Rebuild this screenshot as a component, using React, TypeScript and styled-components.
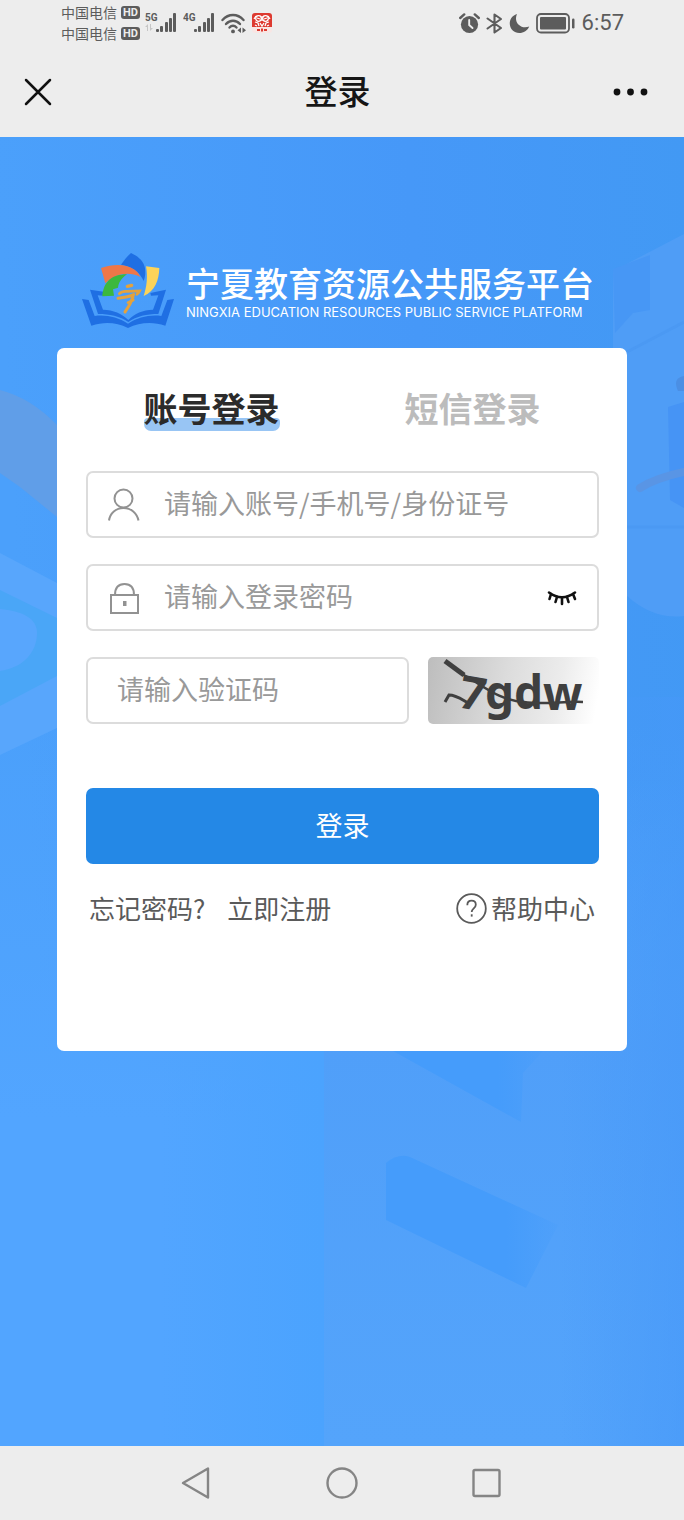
import React, { useState } from "react";
import styled, { createGlobalStyle } from "styled-components";

const GlobalStyle = createGlobalStyle`
  *, *::before, *::after { box-sizing: border-box; }
  body {
    margin: 0;
    font-family: "Noto Sans CJK SC", "Noto Sans", sans-serif;
    background: #ededed;
  }
  button, input { font-family: inherit; }
  svg { display: block; flex: none; }
`;

const Page = styled.div`
  min-height: 100vh;
  display: flex;
  flex-direction: column;
`;

const StatusBar = styled.div`
  height: 46px;
  padding: 0 60px 0 61px;
  display: flex;
  align-items: center;
  justify-content: space-between;
  color: #5c5c5c;
`;

const StatusGroup = styled.div<{ $gap: number }>`
  display: flex;
  align-items: center;
  gap: ${(p) => p.$gap}px;
`;

const Carriers = styled.div`
  display: flex;
  flex-direction: column;
`;

const Carrier = styled.div`
  display: flex;
  align-items: center;
  gap: 4px;
  font-size: 14px;
  line-height: 21px;
`;

const HdBadge = styled.span`
  width: 19px;
  height: 13px;
  border-radius: 3px;
  background: #5c5c5c;
  color: #ededed;
  font: 700 11px/13px Roboto, sans-serif;
  text-align: center;
`;

const Clock = styled.time`
  font: 400 22px/26px Roboto, sans-serif;
`;

const TitleBar = styled.header`
  height: 91px;
  padding: 0 31px 0 22px;
  display: grid;
  grid-template-columns: 1fr auto 1fr;
  align-items: center;
`;

const Title = styled.h1`
  margin: 0;
  padding-bottom: 4px;
  font-size: 33px;
  line-height: 48px;
  font-weight: 500;
  color: #161616;
`;

const IconButton = styled.button<{ $end?: boolean }>`
  justify-self: ${(p) => (p.$end ? "end" : "start")};
  padding: 0;
  border: 0;
  background: none;
  color: #111;
  cursor: pointer;
`;

const Main = styled.main`
  flex: 1;
  display: grid;
  grid-template: minmax(0, 1fr) / minmax(0, 1fr);
  overflow: hidden;
  background: #4a9efb;
`;

const Backdrop = styled.div`
  grid-area: 1 / 1;
  display: grid;
  contain: size;
  & > svg { width: 100%; height: 100%; }
`;

const Content = styled.div`
  grid-area: 1 / 1;
  position: relative;
  padding: 116px 57px 60px;
`;

const Brand = styled.div`
  display: flex;
  align-items: center;
  justify-content: center;
  gap: 12px;
  height: 75px;
  margin-bottom: 20px;
  padding-right: 8px;
  color: #fff;
`;

const BrandName = styled.div`
  font-size: 34px;
  line-height: 42px;
  font-weight: 500;
  white-space: nowrap;
`;

const BrandEnglish = styled.div`
  font: 400 13px/16px Inter, sans-serif;
  white-space: nowrap;
`;

const Card = styled.section`
  padding: 37px 24px 123px;
  border-radius: 7px;
  background: #fff;
`;

const Tabs = styled.div`
  display: grid;
  grid-template-columns: 1fr 1fr;
  justify-items: center;
`;

const Tab = styled.button<{ $active: boolean }>`
  position: relative;
  z-index: 0;
  padding: 0;
  border: 0;
  background: none;
  font-size: 34px;
  line-height: 46px;
  font-weight: 700;
  color: ${(p) => (p.$active ? "#2b2b2b" : "#bcbcbc")};
  cursor: pointer;

  &::after {
    content: "";
    display: ${(p) => (p.$active ? "block" : "none")};
    position: absolute;
    z-index: -1;
    inset: auto 0 0;
    height: 13px;
    border-radius: 4px 4px 7px 7px;
    background: #98c5f4;
  }
`;

const Form = styled.form`
  padding: 40px 4px 0 5px;
  display: flex;
  flex-direction: column;
  gap: 26px;
`;

const Field = styled.label<{ $inset?: number }>`
  width: 100%;
  min-width: 0;
  height: 67px;
  padding: 0 20px 0 ${(p) => p.$inset ?? 20}px;
  display: flex;
  align-items: center;
  gap: 24px;
  border: 2px solid #dcdcdc;
  border-radius: 7px;
  color: #929292;
`;

const TextInput = styled.input`
  flex: 1;
  min-width: 0;
  height: 44px;
  padding: 0 0 4px;
  border: 0;
  outline: 0;
  background: none;
  font-size: 27px;
  color: #333;
  &::placeholder { color: #999; opacity: 1; }
`;

const CaptchaRow = styled.div`
  display: flex;
  gap: 19px;
`;

const Captcha = styled.button`
  flex: none;
  width: 171px;
  height: 67px;
  padding: 0;
  border: 0;
  border-radius: 5px;
  background: linear-gradient(100deg, #bdbdbd 0%, #dcdcdc 45%, #ececec 75%, #fff 97%);
  cursor: pointer;
  & > svg { overflow: visible; }
`;

const Submit = styled.button`
  height: 76px;
  margin-top: 38px;
  padding: 0 0 4px;
  border: 0;
  border-radius: 7px;
  background: #2488e6;
  color: #fff;
  font-size: 27px;
  cursor: pointer;
`;

const Links = styled.nav`
  margin: 24px 8px 0;
  display: flex;
  align-items: center;
  gap: 22px;
  line-height: 40px;
`;

const TextLink = styled.a<{ $end?: boolean }>`
  margin-left: ${(p) => (p.$end ? "auto" : "0")};
  display: flex;
  align-items: center;
  gap: 4px;
  font-size: 26px;
  color: #5a5a5a;
  text-decoration: none;
`;

const SystemNav = styled.footer`
  height: 74px;
  display: flex;
  align-items: center;
  justify-content: center;
  gap: 113px;
  color: #858585;
`;

const Signal = ({ label, faded }: { label: string; faded?: boolean }) => (
  <svg width="33" height="22" viewBox="0 0 33 22" fill="currentColor" aria-label={label}>
    <text x="0" y="9" fontFamily="Roboto, sans-serif" fontSize="10" fontWeight="700">{label}</text>
    {faded && (
      <g fill="#c6c6c6">
        <path d="M0 15l3-3v7H2v-4zM5 12h1v4h2l-3 3z" />
      </g>
    )}
    <rect x="11" y="17" width="3" height="3" rx="1" />
    <rect x="15" y="14" width="3" height="6" rx="1" />
    <rect x="20" y="10" width="3" height="10" rx="1" />
    <rect x="24" y="6" width="3" height="14" rx="1" />
    <rect x="28" y="1" width="3" height="19" rx="1" />
  </svg>
);

const WifiIcon = () => (
  <svg width="26" height="21" viewBox="0 0 26 21" fill="none" stroke="currentColor" strokeWidth="2.4" strokeLinecap="round">
    <path d="M1.500 7C7.500 0.400 16.500 0.400 22.500 7" />
    <path d="M5 11C9 6.600 15 6.600 19 11" />
    <path d="M8.500 14.500C10.600 12.200 13.400 12.200 15.500 14.500" />
    <circle cx="12" cy="18.400" r="1.900" fill="currentColor" stroke="none" />
    <path d="M20 14.500v5.500l-3.500-2.700zM21.500 14.500v5.500l3.500-2.700z" fill="currentColor" stroke="none" />
  </svg>
);

const AppBadge = () => (
  <svg width="20" height="20" viewBox="0 0 20 20">
    <path d="M0 3q0-3 3-3h14q3 0 3 3v11H0z" fill="#dd3a30" />
    <path d="M0 14h20v3q0 3-3 3H3q-3 0-3-3z" fill="#f8e6e4" />
    <g fill="none" stroke="#fff" strokeWidth="1.300">
      <circle cx="6.500" cy="5.500" r="2.800" />
      <circle cx="13.500" cy="5.500" r="2.800" />
      <path d="M3 9l3 1 1 3M17 9l-3 1-1 3M8 10l2 3 2-3M10 3v5M3 12l2 1M17 12l-2 1M2 6l2-3M18 6l-2-3M5 5l3 1M12 6l3-1" />
    </g>
    <path d="M5 16h3v2H5zM9 15.500h2v3H9zM12 16h3v2h-3z" fill="#dd3a30" />
  </svg>
);

const AlarmIcon = () => (
  <svg width="21" height="21" viewBox="0 0 21 21" fill="none">
    <circle cx="10.500" cy="11.500" r="8.600" fill="currentColor" />
    <path d="M1.200 5L5.200 1.400M19.800 5L15.800 1.400" stroke="currentColor" strokeWidth="2.400" strokeLinecap="round" />
    <path d="M10.200 7v5l3.300 3" stroke="#ededed" strokeWidth="1.900" strokeLinecap="round" />
  </svg>
);

const BluetoothIcon = () => (
  <svg width="17" height="21" viewBox="0 0 17 21" fill="none" stroke="currentColor" strokeWidth="2.100" strokeLinejoin="round" strokeLinecap="round">
    <path d="M1.500 5.500L15 15 8.500 19.500V1.500L15 6 1.500 15.500" />
  </svg>
);

const MoonIcon = () => (
  <svg width="21" height="21" viewBox="0 0 21 21" fill="currentColor">
    <path d="M8 1C2.800 2.500 .5 7 .8 11.300c.4 5 4.400 8.700 9.400 8.700 4.500 0 8.400-2.500 10-6.500-3.500 1.500-7.800 1-10.500-1.700C6.800 9 6.300 4.800 8 1z" />
  </svg>
);

const BatteryIcon = () => (
  <svg width="40" height="21" viewBox="0 0 40 21" fill="none">
    <rect x="1" y="1" width="32" height="18.500" rx="4" stroke="currentColor" strokeWidth="1.800" />
    <rect x="4" y="4" width="26" height="12.500" rx="1" fill="currentColor" />
    <rect x="36" y="5.500" width="2.500" height="10" rx="1.200" fill="currentColor" />
  </svg>
);

const LogoMark = () => (
  <svg width="92" height="75" viewBox="33 38 276 225" aria-hidden="true">
    <g fill="#1f6fe3">
      <path d="M150 73C160 59 170 46 180 38c20 9 39 24 42 46 2 15 0 27-4 38-10-24-32-43-68-49z" />
      <path d="M33 176l20 3 18 48c33-5 69 3 100 23 31-20 67-28 100-23l18-48 20-3-26 80c-40-13-78-9-112 7-34-16-68-20-110-7z" />
      <path d="M57 148l41 6-3 12-15-1 16 43c31 1 56 11 76 31 19-20 43-30 74-31l16-43-22 1-2-8 47-10-23 73c-35 0-65 7-90 24-25-17-57-24-91-24z" />
    </g>
    <path d="M90 83c38-14 78-12 101 5 9 7 14 14 17 22-33-16-70-13-105 19z" fill="#ee7748" />
    <path d="M94 168c3-41 26-66 74-66-18 13-25 25-27 40l-15 5 3 19z" fill="#3cb83d" />
    <path d="M225 78l40 5c-1 36-13 70-47 84 9-27 13-56 7-89z" fill="#fbd35a" />
    <g fill="none" stroke="#e5a23c" strokeLinecap="round">
      <path d="M169 138l13-3" strokeWidth="10" />
      <path d="M145 160q7-8 22-7l39-1q-3 6-8 10" strokeWidth="8" />
      <path d="M141 174q32-4 47-11M186 170q-8 24-24 45" strokeWidth="9" />
      <path d="M171 187l16-8" strokeWidth="8" />
    </g>
  </svg>
);

const UserIcon = () => (
  <svg width="32" height="34" viewBox="0 0 32 34" fill="none" stroke="currentColor" strokeWidth="2">
    <circle cx="15.500" cy="10.500" r="9" />
    <path d="M1 32.500c1-7.500 7-12.500 14.500-12.500S29 25 30.500 32.500" />
  </svg>
);

const LockIcon = () => (
  <svg width="32" height="34" viewBox="0 0 32 34" fill="none" stroke="currentColor" strokeWidth="2">
    <rect x="3" y="14" width="27" height="18" />
    <path d="M7 14C7 6.500 10.800 3 16.500 3S26 6.500 26 14" />
    <path d="M15 20h3.500v5H15z" fill="currentColor" stroke="none" />
  </svg>
);

const ClosedEyeIcon = () => (
  <svg width="30" height="20" viewBox="0 0 30 20" fill="none" stroke="currentColor" strokeWidth="2.600" strokeLinecap="round">
    <path d="M2 4.500Q15 14 28 4.500" />
    <path d="M4 6L2.500 11M10 9L8.500 14M15 10v6M20 9l1.500 5M26 6l2 5" />
  </svg>
);

const HelpIcon = () => (
  <svg width="31" height="31" viewBox="0 0 31 31" fill="none" stroke="currentColor" strokeWidth="1.800">
    <circle cx="15.500" cy="15.500" r="14.300" />
    <path d="M11.300 12.200c0-2.800 1.800-4.500 4.300-4.500s4.200 1.600 4.200 4c0 3.600-4.100 3.700-4.100 7.300" />
    <path d="M15.700 21.300v2.300" />
  </svg>
);

const CaptchaDrawing = () => (
  <svg width="171" height="67" viewBox="0 0 171 67" fill="#3f3f3f">
    <g fontFamily="'Noto Sans', sans-serif" fontWeight="700" fontSize="46">
      <text transform="translate(29 50) rotate(10)">7</text>
      <text x="57" y="52">g</text>
      <text x="86" y="52">d</text>
      <text x="115" y="53">w</text>
    </g>
    <g fill="none" stroke="#3f3f3f">
      <path d="M17 4l19 14" strokeWidth="5" />
      <path d="M34 17c22 12 36 26 62 28 20 3 40-1 59 0" strokeWidth="2.500" />
      <path d="M17 45l4-7c7 0 12 4 19 8" strokeWidth="3" />
    </g>
  </svg>
);

const BackdropArt = () => (
  <svg viewBox="0 0 684 1309" preserveAspectRatio="xMidYMid slice" aria-hidden="true">
    <defs>
      <linearGradient id="sky" x1="0" y1="0.1" x2="1" y2="0">
        <stop offset="0" stopColor="#4ba0fb" />
        <stop offset="0.6" stopColor="#4698f8" />
        <stop offset="1" stopColor="#4299f4" />
      </linearGradient>
      <linearGradient id="floor" x1="0" y1="0" x2="0" y2="1">
        <stop offset="0.45" stopColor="#52a5ff" stopOpacity="0" />
        <stop offset="0.75" stopColor="#52a5ff" />
      </linearGradient>
      <linearGradient id="panel" x1="0" y1="0" x2="1" y2="0">
        <stop offset="0" stopColor="#4ba3fe" stopOpacity="0" />
        <stop offset="1" stopColor="#4ba3fe" />
      </linearGradient>
      <linearGradient id="wall" x1="0" y1="0" x2="0" y2="1">
        <stop offset="0" stopColor="#4f9ff8" stopOpacity="0" />
        <stop offset="0.4" stopColor="#509ff9" />
        <stop offset="1" stopColor="#54a4fb" />
      </linearGradient>
      <linearGradient id="edge" x1="0" y1="0" x2="1" y2="0">
        <stop offset="0" stopColor="#4698f8" stopOpacity="0" />
        <stop offset="1" stopColor="#4698f8" stopOpacity="0.6" />
      </linearGradient>
      <linearGradient id="slab" x1="0" y1="0" x2="1" y2="0">
        <stop offset="0.7" stopColor="#459cfb" />
        <stop offset="1" stopColor="#459cfb" stopOpacity="0.2" />
      </linearGradient>
    </defs>
    <rect width="684" height="1309" fill="url(#sky)" />
    <rect width="684" height="1309" fill="url(#floor)" />
    <path d="M0 253q31 8 57 35v92L20 350 0 336z" fill="#609ee8" />
    <path d="M0 416l57 30v145L0 618z" fill="#58a6fc" />
    <path d="M0 453l57 28v58L0 569z" fill="#4aa6f7" />
    <path d="M0 472c22 2 37 9 37 24 0 20-15 35-37 38z" fill="#58a6fd" />
    <path d="M684 97l-71 37v80h14v245q27 24 57 20z" fill="#4f9df6" />
    <path d="M613 132l37-14v55l-17 3-18 20z" fill="#4797f5" />
    <path d="M627 215l57-30M627 390h57" stroke="#4b99f3" strokeWidth="3" />
    <path d="M668 270l16-5v106l-14-8z" fill="#4694f5" />
    <path d="M640 351q16-10 44-16" stroke="#5995e5" strokeWidth="8" strokeLinecap="round" fill="none" />
    <path d="M684 239q-12 2-6 15h6z" fill="#4b8fe4" />
    <rect x="160" y="880" width="164" height="429" fill="url(#panel)" />
    <rect x="324" y="640" width="360" height="669" fill="url(#wall)" />
    <rect x="560" y="560" width="124" height="749" fill="url(#edge)" />
    <path d="M393 914h150l-20 22-2 49z" fill="url(#slab)" />
    <path d="M386 1026q12-10 24-6l148 68-32 63-140-68z" fill="url(#slab)" />
  </svg>
);

export default function App() {
  const [tab, setTab] = useState(0);
  return (
    <Page>
      <GlobalStyle />
      <StatusBar>
        <StatusGroup $gap={5}>
          <Carriers>
            <Carrier>中国电信<HdBadge>HD</HdBadge></Carrier>
            <Carrier>中国电信<HdBadge>HD</HdBadge></Carrier>
          </Carriers>
          <Signal label="5G" faded />
          <Signal label="4G" />
          <WifiIcon />
          <AppBadge />
        </StatusGroup>
        <StatusGroup $gap={6}>
          <AlarmIcon />
          <BluetoothIcon />
          <MoonIcon />
          <BatteryIcon />
          <Clock>6:57</Clock>
        </StatusGroup>
      </StatusBar>

      <TitleBar>
        <IconButton aria-label="关闭">
          <svg width="32" height="32" viewBox="0 0 32 32" stroke="currentColor" strokeWidth="2.500" strokeLinecap="round">
            <path d="M4 4l24 24M28 4L4 28" />
          </svg>
        </IconButton>
        <Title>登录</Title>
        <IconButton $end aria-label="更多">
          <svg width="42" height="10" viewBox="0 0 42 10" fill="currentColor">
            <circle cx="6" cy="5" r="3.400" />
            <circle cx="19.500" cy="5" r="3.400" />
            <circle cx="33" cy="5" r="3.400" />
          </svg>
        </IconButton>
      </TitleBar>

      <Main>
        <Backdrop><BackdropArt /></Backdrop>
        <Content>
          <Brand>
            <LogoMark />
            <div>
              <BrandName>宁夏教育资源公共服务平台</BrandName>
              <BrandEnglish>NINGXIA EDUCATION RESOURCES PUBLIC SERVICE PLATFORM</BrandEnglish>
            </div>
          </Brand>
          <Card>
            <Tabs role="tablist">
              {["账号登录", "短信登录"].map((name, i) => (
                <Tab key={name} role="tab" aria-selected={tab === i} $active={tab === i} onClick={() => setTab(i)}>
                  {name}
                </Tab>
              ))}
            </Tabs>
            <Form onSubmit={(e) => e.preventDefault()}>
              <Field>
                <UserIcon />
                <TextInput aria-label="账号" placeholder="请输入账号/手机号/身份证号" />
              </Field>
              <Field>
                <LockIcon />
                <TextInput type="password" aria-label="密码" placeholder="请输入登录密码" />
                <IconButton type="button" aria-label="显示密码"><ClosedEyeIcon /></IconButton>
              </Field>
              <CaptchaRow>
                <Field $inset={29}>
                  <TextInput aria-label="验证码" placeholder="请输入验证码" />
                </Field>
                <Captcha type="button" aria-label="刷新验证码"><CaptchaDrawing /></Captcha>
              </CaptchaRow>
              <Submit type="submit">登录</Submit>
            </Form>
            <Links>
              <TextLink href="#forgot">忘记密码?</TextLink>
              <TextLink href="#register">立即注册</TextLink>
              <TextLink href="#help" $end><HelpIcon />帮助中心</TextLink>
            </Links>
          </Card>
        </Content>
      </Main>

      <SystemNav>
        <IconButton aria-label="返回">
          <svg width="32" height="34" viewBox="0 0 32 34" fill="none" stroke="#858585" strokeWidth="2.400" strokeLinejoin="round">
            <path d="M27 2.500v29L2 17z" />
          </svg>
        </IconButton>
        <IconButton aria-label="主页">
          <svg width="32" height="34" viewBox="0 0 32 34" fill="none" stroke="#858585" strokeWidth="2.400">
            <circle cx="16" cy="17" r="14.500" />
          </svg>
        </IconButton>
        <IconButton aria-label="最近任务">
          <svg width="32" height="34" viewBox="0 0 32 34" fill="none" stroke="#858585" strokeWidth="2.400">
            <rect x="2.500" y="4" width="26" height="26" rx="1.500" />
          </svg>
        </IconButton>
      </SystemNav>
    </Page>
  );
}
